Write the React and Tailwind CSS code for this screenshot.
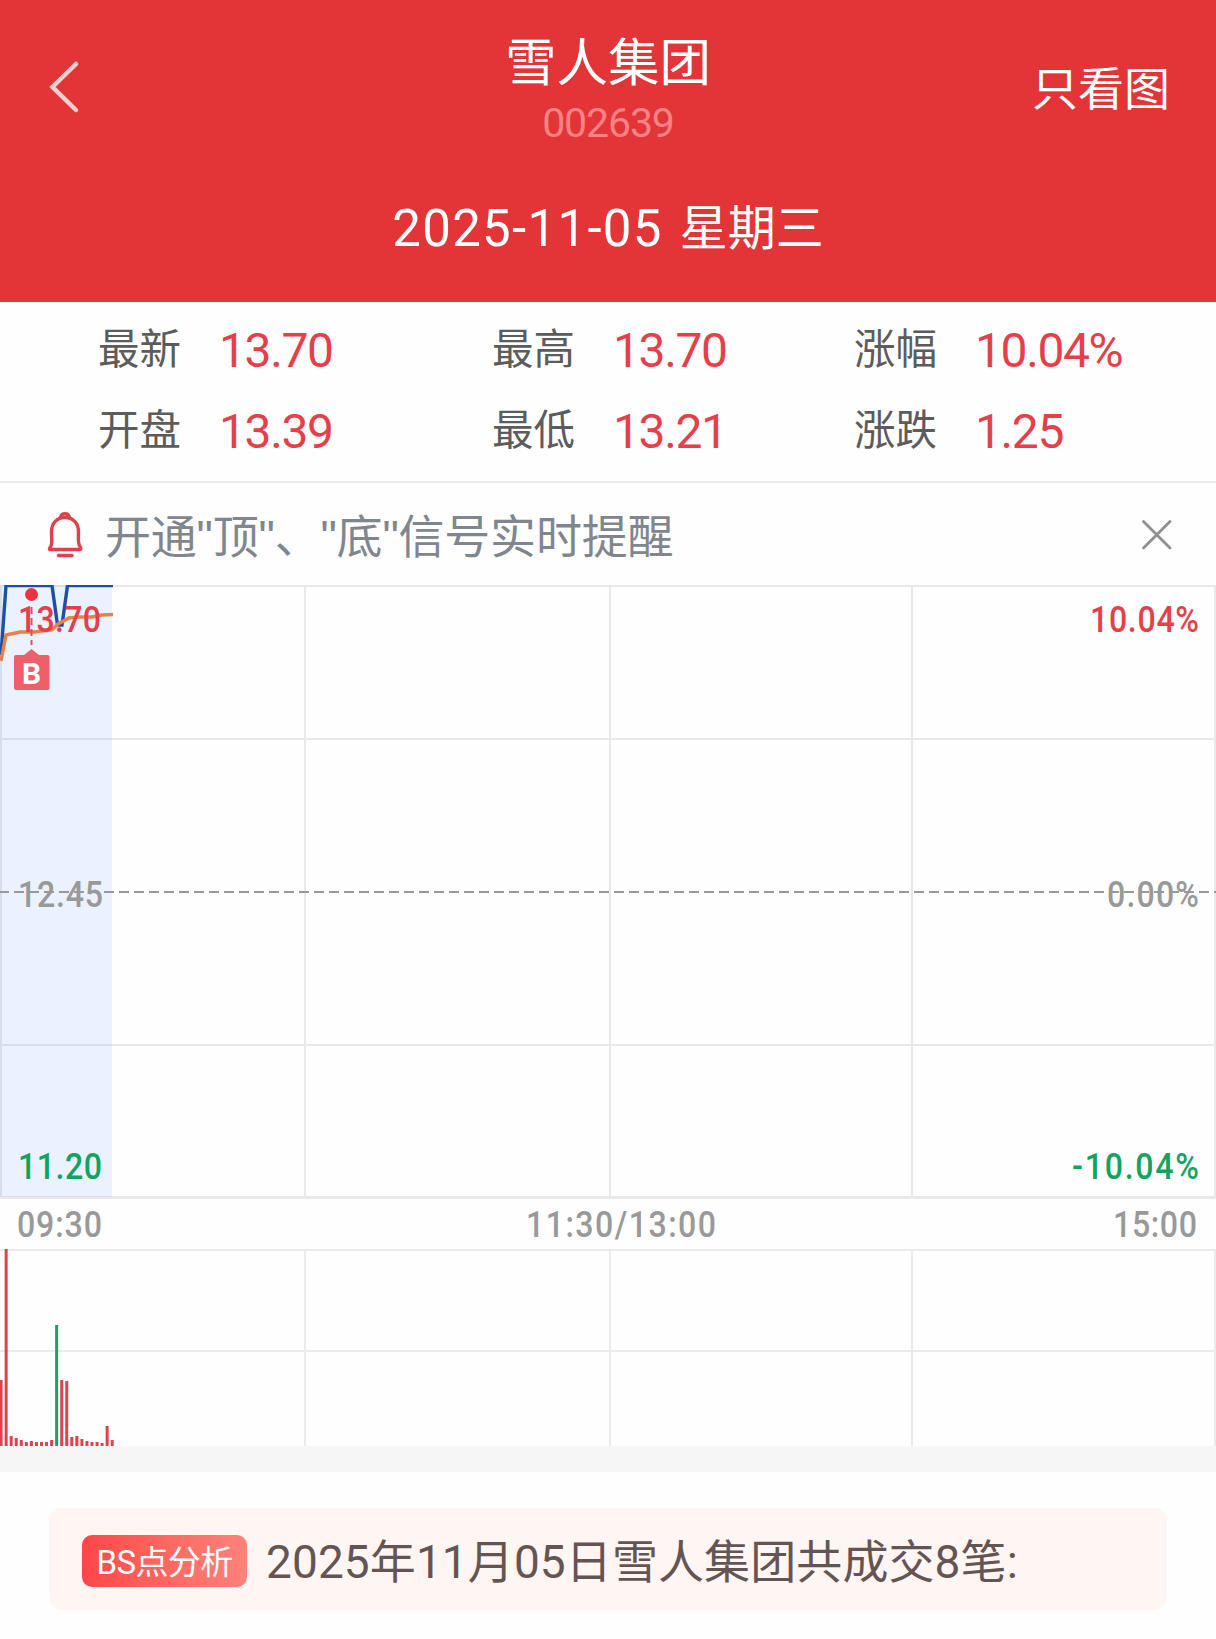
import clsx from "clsx";

const quotes = [
  [
    { label: "最新", value: "13.70" },
    { label: "最高", value: "13.70" },
    { label: "涨幅", value: "10.04%" },
  ],
  [
    { label: "开盘", value: "13.39" },
    { label: "最低", value: "13.21" },
    { label: "涨跌", value: "1.25" },
  ],
];

// Per-minute volume, in chart units
const volumes = [
  66, 197, 10, 8, 6, 4, 5, 4, 4, 4, 6, 121, 66, 65, 9, 10, 7, 5, 4, 4, 3, 20, 6,
];
const FALLING_MINUTE = 11;

const priceLabels = [
  { text: "13.70", x: 18, y: 47, width: 83, color: "fill-[#e5404a]" },
  { text: "12.45", x: 18, y: 322, width: 85, color: "fill-[#999999]" },
  { text: "11.20", x: 18, y: 594, width: 84, color: "fill-[#12a35f]" },
  { text: "10.04%", x: 1090, y: 47, width: 109, color: "fill-[#e5404a]" },
  { text: "0.00%", x: 1107, y: 322, width: 92, color: "fill-[#999999]" },
  { text: "-10.04%", x: 1072, y: 594, width: 127, color: "fill-[#12a35f]" },
];

const timeLabels = [
  { text: "09:30", x: 17, y: 38, width: 85 },
  { text: "11:30/13:00", x: 526, y: 38, width: 190 },
  { text: "15:00", x: 1113, y: 38, width: 84 },
];

const gridColumns = [305, 610, 912, 1215];

const LABEL_SCALE = 0.88;

// Condensed figures used on the chart axes
const AxisLabel = ({ text, x, y, width, color }) => (
  <text
    transform={`translate(${x} ${y}) scale(${LABEL_SCALE} 1)`}
    textLength={width / LABEL_SCALE}
    className={clsx("font-['Roboto',sans-serif] text-[36.5px] font-medium", color)}
  >
    {text}
  </text>
);

const Header = () => (
  <header className="h-[302px] bg-[#e33537] text-white">
    <div className="flex h-[174px] items-center justify-between">
      <button className="w-[220px] pl-[46px]" aria-label="返回">
        <svg width="36" height="56" viewBox="0 0 36 56" fill="none">
          <path
            d="M30 5 L6.5 28 L30 51"
            stroke="#f1cfcf"
            strokeWidth="4.5"
            strokeLinecap="round"
          />
        </svg>
      </button>
      <div className="flex flex-col items-center pt-[11px]">
        <h1 className="text-[51.5px] leading-[58px]">雪人集团</h1>
        <p className="pt-[2px] font-['Roboto',sans-serif] text-[41px] leading-[66px] tracking-[-1.1px] text-[#f98384]">
          002639
        </p>
      </div>
      <button className="w-[220px] pr-[46px] pb-[4px] text-right text-[46px] leading-[60px]">
        只看图
      </button>
    </div>
    <p className="flex items-center justify-center gap-[17px] pt-[16px] text-[48px] leading-[64px]">
      <span className="pt-[7px] font-['Roboto',sans-serif] text-[51px] tracking-[1.3px]">
        2025-11-05
      </span>
      <span className="-mt-[4px]">星期三</span>
    </p>
  </header>
);

const QuotePanel = () => (
  <section className="flex h-[181px] flex-col border-b-2 border-[#ebebeb] pt-[3px]">
    {quotes.map((row) => (
      <div
        key={row[0].label}
        className="grid h-[81px] grid-cols-[394px_362px_1fr] items-center pl-[98px]"
      >
        {row.map((item) => (
          <div key={item.label} className="flex items-center">
            <span className="w-[121px] text-[41.5px] leading-[60px] text-[#5c5c5c]">
              {item.label}
            </span>
            <span className="pt-[10px] font-['Roboto',sans-serif] text-[48px] leading-[60px] tracking-[-1.4px] text-[#e5404a]">
              {item.value}
            </span>
          </div>
        ))}
      </div>
    ))}
  </section>
);

const SignalNotice = () => (
  <section className="flex h-[102px] items-center pl-[46px] pr-[43px]">
    <svg
      className="mt-[2px]"
      width="38"
      height="48"
      viewBox="0 0 38 48"
      fill="none"
      stroke="#e0424b"
    >
      <path
        d="M5 35 C6.5 32 5.5 28 5.5 21 C5.5 12 11 6.5 19 6.5 C27 6.5 32.5 12 32.5 21 C32.5 28 31.5 32 34 35.5 Q36 38.5 33.5 38.5 H5 Q2 38.5 5 35 Z"
        strokeWidth="3.4"
        strokeLinejoin="round"
      />
      <path d="M14.5 6.5 C15.5 1.5 22.5 1.5 23.5 6.5" strokeWidth="3.4" />
      <path d="M12.5 44.5 H26" strokeWidth="3.4" strokeLinecap="round" />
    </svg>
    <p className="ml-[21px] flex-1 pt-[5px] font-['Liberation_Sans','Noto_Sans_CJK_SC',sans-serif] text-[46px] leading-[60px] tracking-[-0.2px] text-[#80868e]">
      开通"顶"、"底"信号实时提醒
    </p>
    <button className="mt-[2px]" aria-label="关闭">
      <svg width="32" height="32" viewBox="0 0 32 32" fill="none">
        <path
          d="M2.5 2.5 L29 29 M29 2.5 L2.5 29"
          stroke="#8f8f8f"
          strokeWidth="2.8"
          strokeLinecap="round"
        />
      </svg>
    </button>
  </section>
);

const PriceChart = () => (
  <svg className="block" width="1216" height="614" viewBox="0 0 1216 614">
    <rect x="0" y="0" width="112" height="612" fill="#ebf2ff" />

    {/* Grid */}
    <g fill="none" stroke="#000000" opacity="0.08" strokeWidth="2">
      <path d="M0 1 H1216 M0 154 H1216 M0 460 H1216" />
      <path d="M1 2 V611" />
      {gridColumns.map((x) => (
        <path key={x} d={`M${x} 2 V611`} />
      ))}
      <path d="M0 612.5 H1216" strokeWidth="3" />
    </g>
    <path
      d="M-1 307 H1216"
      stroke="#999999"
      strokeWidth="2"
      strokeDasharray="10 5"
    />

    {/* Price and average lines */}
    <path
      d="M1 70 L6 0.5 H52 L57.5 40 H62 L67.5 0.5 H113"
      fill="none"
      stroke="#1c50a4"
      strokeWidth="3.4"
    />
    <path
      d="M1 76 L6 50 L20 47 L34 47 L52 45 L58 39 L69 33 L80 32 L92 32 L102 30 L113 29.5"
      fill="none"
      stroke="#ea8048"
      strokeWidth="3.4"
    />
    {priceLabels.map((label) => (
      <AxisLabel key={label.text} {...label} />
    ))}

    {/* Buy point */}
    <circle cx="31.5" cy="9.5" r="6.5" fill="#ee343f" />
    <path d="M31.5 22 V60" stroke="#ee4a55" strokeWidth="2" strokeDasharray="7 4" />
    <path
      d="M24 70 L31.5 64 L39 70 H47.5 Q49.5 70 49.5 72 V103 Q49.5 105 47.5 105 H16 Q14 105 14 103 V72 Q14 70 16 70 Z"
      fill="#ee5f6a"
    />
    <text
      x="31.5"
      y="98.5"
      textAnchor="middle"
      className="fill-white font-['Roboto',sans-serif] text-[30px] font-bold"
    >
      B
    </text>
  </svg>
);

const TimeAxis = () => (
  <svg className="block" width="1216" height="50" viewBox="0 0 1216 50">
    {timeLabels.map((label) => (
      <AxisLabel key={label.text} {...label} color="fill-[#999999]" />
    ))}
  </svg>
);

const VolumeChart = () => (
  <svg className="block" width="1216" height="197" viewBox="0 0 1216 197">
    <g fill="none" stroke="#ebebeb" strokeWidth="2">
      <path d="M0 1 H1216 M0 102 H1216" />
      {gridColumns.map((x) => (
        <path key={x} d={`M${x} 2 V197`} />
      ))}
    </g>
    {volumes.map((volume, i) => (
      <rect
        key={i}
        x={i * 5.05 - 0.4}
        y={197 - volume}
        width="3"
        height={volume}
        className={i === FALLING_MINUTE ? "fill-[#1b9f62]" : "fill-[#dc444d]"}
      />
    ))}
  </svg>
);

const Analysis = () => (
  <section className="h-[167px] px-[49px] pt-[36px]">
    <div className="flex h-[102px] items-center rounded-[13px] bg-[#fff6f4] pl-[33px]">
      <span className="mt-[3px] flex h-[52px] w-[165px] items-center justify-center rounded-[10px] bg-linear-to-r from-[#ff4547] to-[#ff827a] pt-[3px] font-['Roboto','Noto_Sans_CJK_SC',sans-serif] text-[33px] leading-[49px] tracking-[-0.6px] text-white">
        BS点分析
      </span>
      <p className="ml-[19px] pt-[5px] font-['Roboto','Noto_Sans_CJK_SC',sans-serif] text-[46px] leading-[60px] tracking-[0.1px] text-[#655552]">
        2025年11月05日雪人集团共成交8笔:
      </p>
    </div>
  </section>
);

const App = () => {
  return (
    <main className="h-[1639px] w-[1216px] overflow-hidden bg-[#fefefe] font-['Noto_Sans_CJK_SC',sans-serif]">
      <Header />
      <QuotePanel />
      <SignalNotice />
      <PriceChart />
      <TimeAxis />
      <VolumeChart />
      <div className="h-[26px] bg-[#f6f6f6]" />
      <Analysis />
    </main>
  );
};

export default App;
